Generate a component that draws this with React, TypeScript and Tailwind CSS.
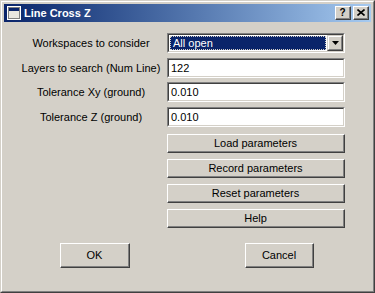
import React from "react";

const FONT = { fontFamily: '"Liberation Sans", Arial, sans-serif' };

function RaisedButton({ label, className }: { label: string; className: string }) {
  return (
    <div
      className={`border-t border-l border-t-white border-l-white border-b border-r border-b-[#404040] border-r-[#404040] bg-[#d4d0c8] ${className}`}
    >
      <div className="flex h-full w-full items-center justify-center border-b border-r border-b-[#808080] border-r-[#808080] text-[11px] text-black">
        {label}
      </div>
    </div>
  );
}

function Field({ value }: { value: string }) {
  return (
    <div className="h-[20px] w-[178px] border-t border-l border-t-[#808080] border-l-[#808080] border-b border-r border-b-white border-r-white">
      <div className="flex h-full items-center border-t border-l border-t-[#404040] border-l-[#404040] border-b border-r border-b-[#d4d0c8] border-r-[#d4d0c8] bg-white pl-[2px] text-[11px] text-black">
        {value}
      </div>
    </div>
  );
}

function Label({ text }: { text: string }) {
  return <div className="flex h-[20px] items-center justify-center text-[11px] text-black">{text}</div>;
}

function Combo() {
  return (
    <div className="h-[20px] w-[178px] border-t border-l border-t-[#808080] border-l-[#808080] border-b border-r border-b-white border-r-white">
      <div className="flex h-full items-stretch border-t border-l border-t-[#404040] border-l-[#404040] border-b border-r border-b-[#d4d0c8] border-r-[#d4d0c8] bg-white">
        <div className="flex flex-1 items-stretch p-[1px]">
          <div className="flex flex-1 items-center border border-dotted border-[#d4d0c8] bg-[#0a246a] pl-[2px] text-[11px] text-white">
            All open
          </div>
        </div>
        <div className="w-[16px] border-t border-l border-t-[#d4d0c8] border-l-[#d4d0c8] border-b border-r border-b-[#404040] border-r-[#404040] bg-[#d4d0c8]">
          <div className="flex h-full items-center justify-center border-t border-l border-t-white border-l-white border-b border-r border-b-[#808080] border-r-[#808080]">
            <svg width="7" height="4" viewBox="0 0 7 4">
              <path d="M0 0h7L3.5 4z" fill="#000" />
            </svg>
          </div>
        </div>
      </div>
    </div>
  );
}

function TitleButton({ children }: { children: React.ReactNode }) {
  return (
    <div className="h-[14px] w-[16px] border-t border-l border-t-white border-l-white border-b border-r border-b-[#404040] border-r-[#404040] bg-[#d4d0c8]">
      <div className="flex h-full w-full items-center justify-center border-b border-r border-b-[#808080] border-r-[#808080]">
        {children}
      </div>
    </div>
  );
}

export default function App() {
  return (
    <div className="h-[293px] w-[375px] bg-[#d4d0c8]" style={FONT}>
      <div className="h-full w-full border-t border-l border-t-[#d4d0c8] border-l-[#d4d0c8] border-b border-r border-b-[#404040] border-r-[#404040]">
        <div className="flex h-full w-full flex-col border-t border-l border-t-white border-l-white border-b border-r border-b-[#808080] border-r-[#808080] p-[2px]">
          {/* title bar */}
          <div className="flex h-[18px] items-center bg-gradient-to-r from-[#0a246a] to-[#a6caf0] pl-[3px] pr-[2px]">
            <svg width="14" height="14" viewBox="0 0 14 14" className="shrink-0">
              <rect x="0.5" y="0.5" width="13" height="13" fill="#d4d0c8" stroke="#ffffff" />
              <rect x="1.5" y="1.5" width="11" height="11" fill="#d4d0c8" stroke="#808080" />
              <rect x="2" y="2" width="10" height="3" fill="#0a246a" />
              <rect x="2" y="5" width="10" height="7" fill="#e8e6e0" />
            </svg>
            <span className="ml-[3px] text-[11px] font-bold text-white">Line Cross Z</span>
            <div className="ml-auto flex gap-[2px]">
              <TitleButton>
                <span className="text-[10px] font-bold leading-none text-black">?</span>
              </TitleButton>
              <TitleButton>
                <svg width="8" height="7" viewBox="0 0 8 7">
                  <path d="M0.5 0.5L7.5 6.5M7.5 0.5L0.5 6.5" stroke="#000" strokeWidth="1.6" />
                </svg>
              </TitleButton>
            </div>
          </div>

          {/* body */}
          <div className="flex flex-col pl-[16px] pt-[11px]">
            <div className="grid grid-cols-[142px_178px] gap-x-[5px]">
              <Label text="Workspaces to consider" />
              <Combo />
              <div className="col-span-2 h-[5px]" />
              <Label text="Layers to search (Num Line)" />
              <Field value="122" />
              <div className="col-span-2 h-[4px]" />
              <Label text="Tolerance Xy (ground)" />
              <Field value="0.010" />
              <div className="col-span-2 h-[5px]" />
              <Label text="Tolerance Z (ground)" />
              <Field value="0.010" />
            </div>
            <div className="ml-[147px] mt-[7px] flex flex-col gap-[6px]">
              <RaisedButton label="Load parameters" className="h-[19px] w-[178px]" />
              <RaisedButton label="Record parameters" className="h-[19px] w-[178px]" />
              <RaisedButton label="Reset parameters" className="h-[19px] w-[178px]" />
              <RaisedButton label="Help" className="h-[19px] w-[178px]" />
            </div>
            <div className="mt-[15px] flex">
              <RaisedButton label="OK" className="ml-[40px] h-[25px] w-[70px]" />
              <RaisedButton label="Cancel" className="ml-[115px] h-[25px] w-[69px]" />
            </div>
          </div>
        </div>
      </div>
    </div>
  );
}
